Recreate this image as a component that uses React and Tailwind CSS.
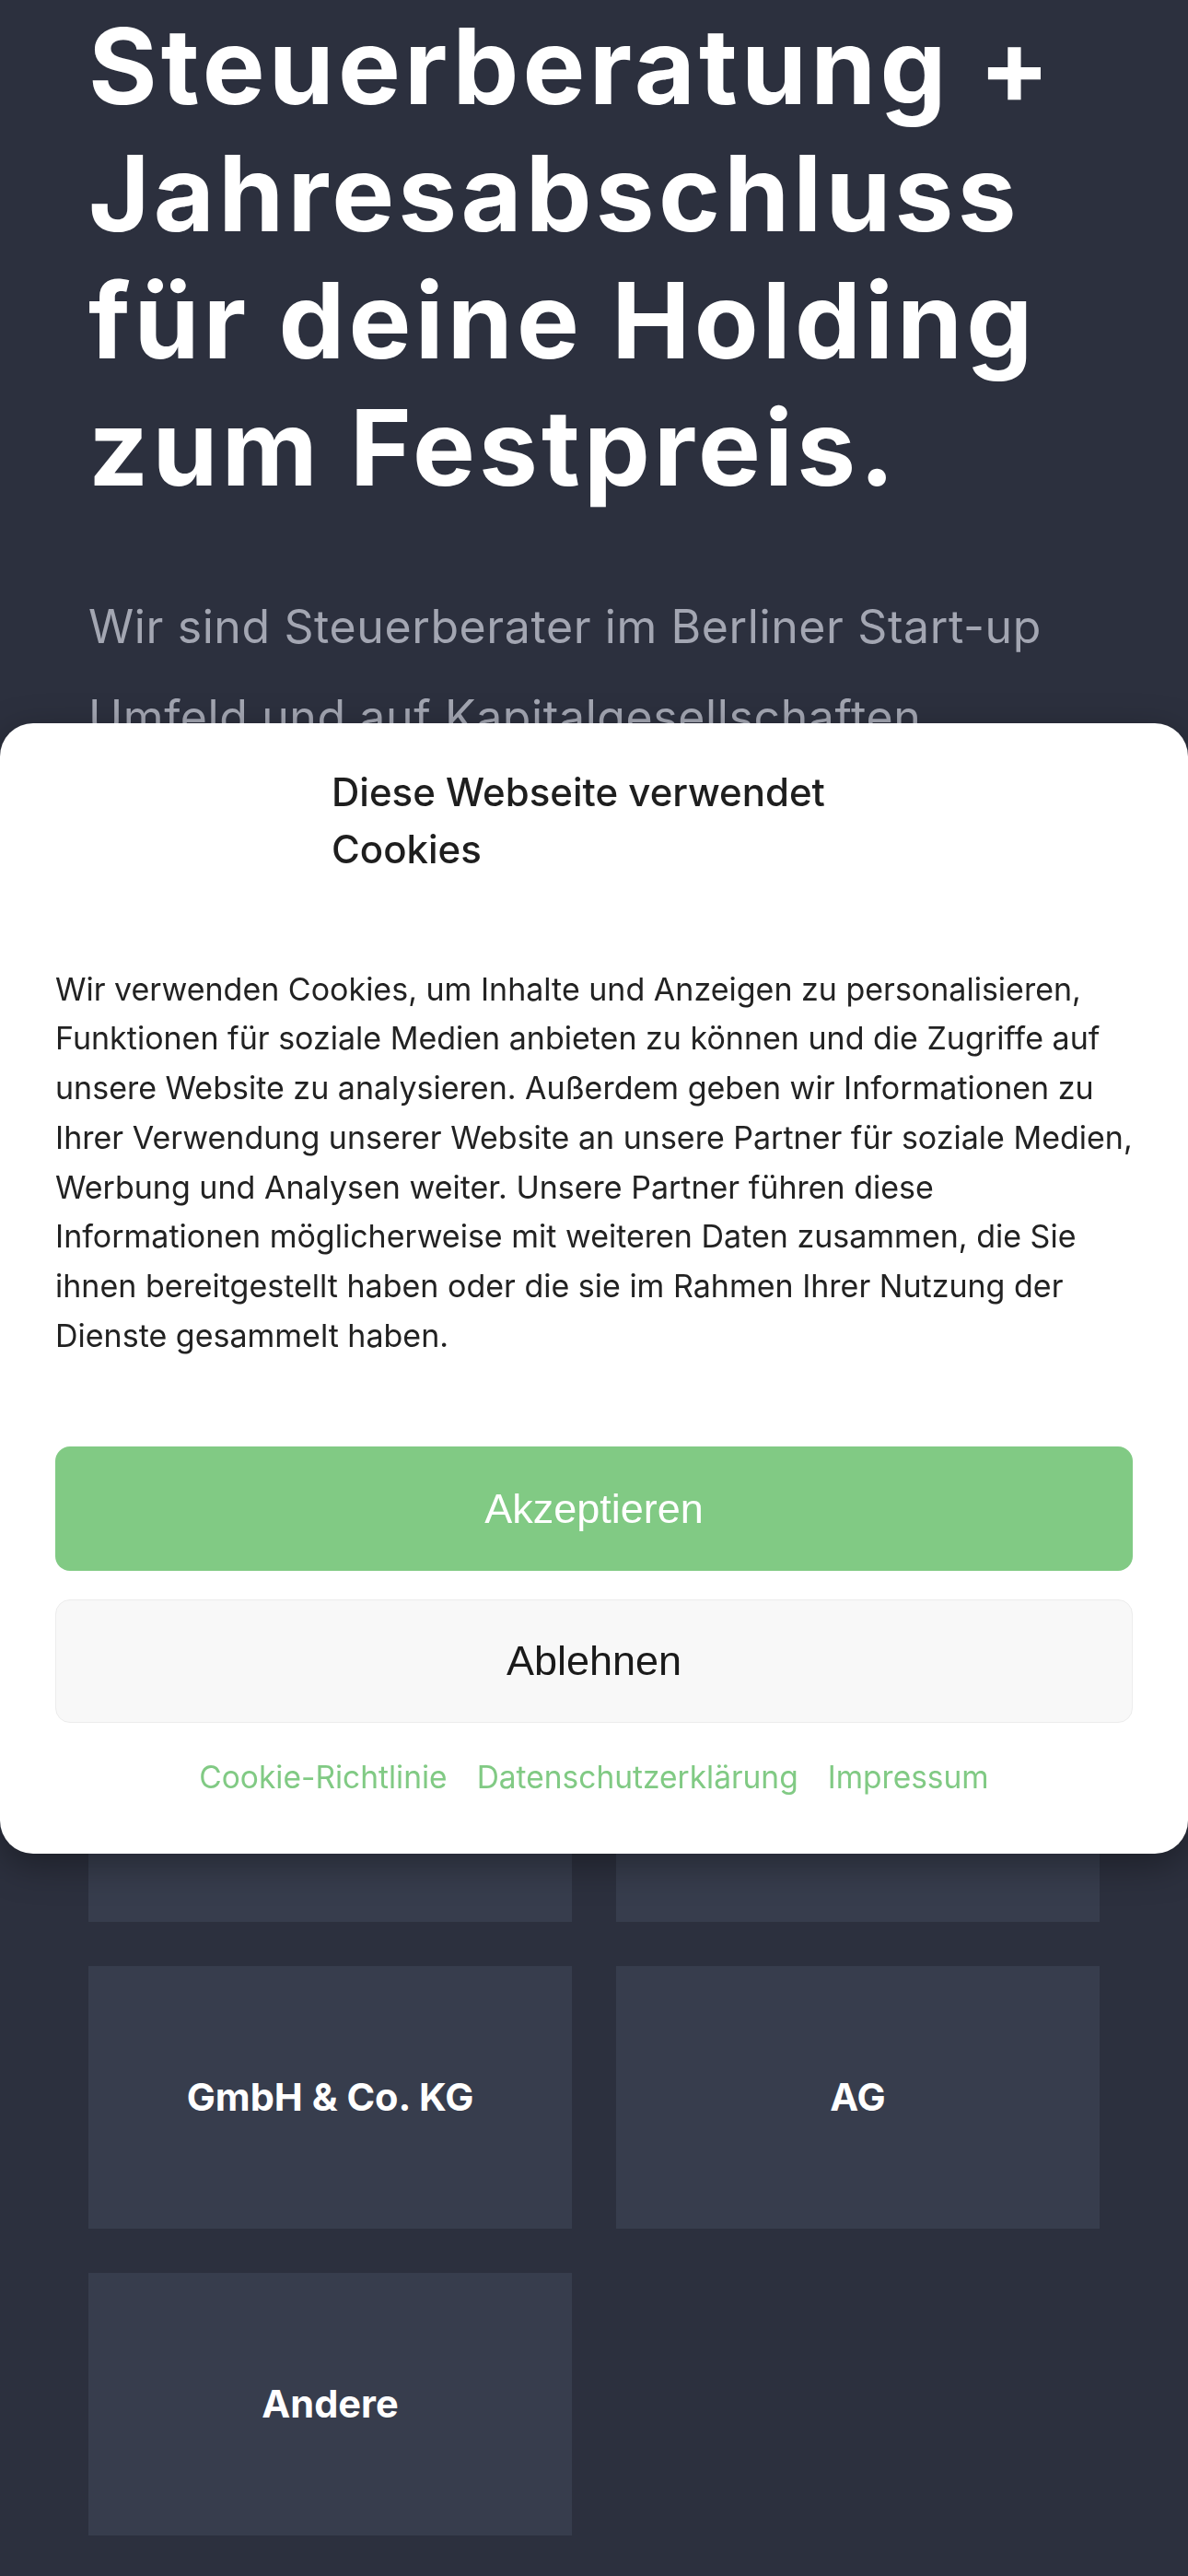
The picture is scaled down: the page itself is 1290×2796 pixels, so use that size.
import React from "react";

const cards = ["", "", "GmbH & Co. KG", "AG", "Andere"];

const bodyLines = [
  "Wir verwenden Cookies, um Inhalte und Anzeigen zu personalisieren,",
  "Funktionen für soziale Medien anbieten zu können und die Zugriffe auf",
  "unsere Website zu analysieren. Außerdem geben wir Informationen zu",
  "Ihrer Verwendung unserer Website an unsere Partner für soziale Medien,",
  "Werbung und Analysen weiter. Unsere Partner führen diese",
  "Informationen möglicherweise mit weiteren Daten zusammen, die Sie",
  "ihnen bereitgestellt haben oder die sie im Rahmen Ihrer Nutzung der",
  "Dienste gesammelt haben.",
];

export default function App() {
  return (
    <div className="min-h-[2796px] w-full bg-[#2c303e] font-['Inter','Noto_Sans',sans-serif]">
      <main className="px-[96px] pt-[3px] pb-[60px]">
        <h1 className="text-[114px] leading-[138px] font-bold text-white tracking-[4.2px] whitespace-nowrap">
          Steuerberatung +<br />
          Jahresabschluss<br />
          für deine Holding<br />
          zum Festpreis.
        </h1>
        <p className="mt-[76px] text-[50px] leading-[98px] text-[#a3a6b2] tracking-[0.6px] whitespace-nowrap">
          Wir sind Steuerberater im Berliner Start-up<br />
          Umfeld und auf Kapitalgesellschaften
        </p>
        <div className="mt-[974px] grid grid-cols-2 gap-x-[48px] gap-y-[48px]">
          {cards.map((c, i) => (
            <div
              key={i}
              className="h-[285px] bg-[#373d4d] flex items-center justify-center text-white font-bold text-[41.5px] text-center px-4"
            >
              {c}
            </div>
          ))}
        </div>
      </main>

      <div className="fixed inset-0 flex items-center">
        <div className="w-full h-[1227px] bg-white rounded-[36px] shadow-[0_12px_40px_rgba(0,0,0,0.35)] px-[60px] pt-[44px]">
          <div className="w-[570px] mx-auto">
            <h2 className="text-[42px] leading-[62px] font-medium text-[#1e1e1e]">
              Diese Webseite verwendet Cookies
            </h2>
          </div>
          <p className="mt-[94px] text-[34px] leading-[53.8px] text-[#222222] whitespace-nowrap">
            {bodyLines.map((l, i) => (
              <React.Fragment key={i}>
                {l}
                {i < bodyLines.length - 1 && <br />}
              </React.Fragment>
            ))}
          </p>
          <button className="mt-[93px] w-full h-[135px] rounded-[16px] bg-[#81ca84] text-white text-[45px] font-['Liberation_Sans',Arial,sans-serif]">
            Akzeptieren
          </button>
          <button className="mt-[31px] w-full h-[134px] rounded-[16px] bg-[#f8f8f8] border border-[#ececec] text-[#1a1a1a] text-[45px] font-['Liberation_Sans',Arial,sans-serif]">
            Ablehnen
          </button>
          <div className="mt-[34px] flex justify-center gap-[32px] text-[33.5px] leading-[50px] text-[#81ca84]">
            <a>Cookie-Richtlinie</a>
            <a>Datenschutzerklärung</a>
            <a>Impressum</a>
          </div>
        </div>
      </div>
    </div>
  );
}
